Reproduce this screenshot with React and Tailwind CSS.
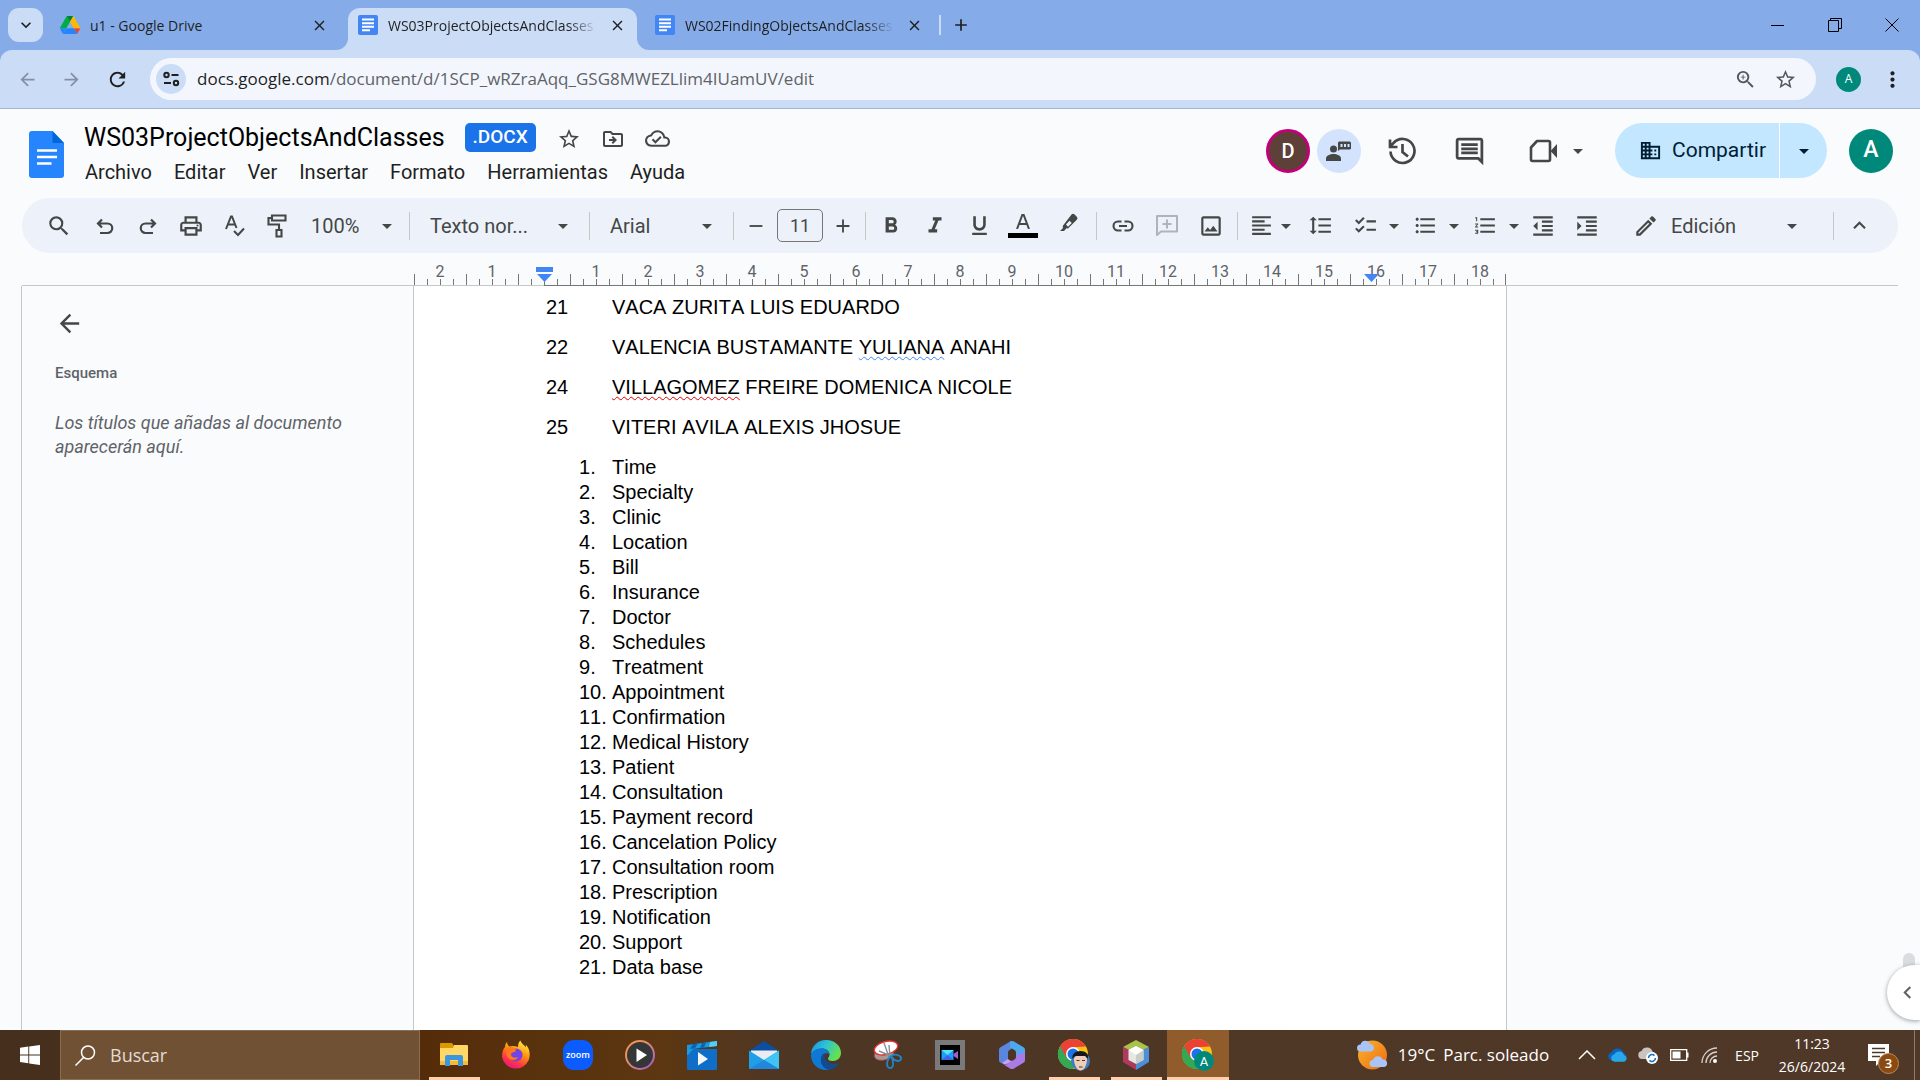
import React from "react";
import {
  MdAdd,
  MdArrowBack,
  MdArrowDropDown,
  MdArrowForward,
  MdChecklist,
  MdChevronLeft,
  MdClose,
  MdDomain,
  MdFormatAlignLeft,
  MdFormatBold,
  MdFormatIndentDecrease,
  MdFormatIndentIncrease,
  MdFormatItalic,
  MdFormatLineSpacing,
  MdFormatListBulleted,
  MdFormatListNumbered,
  MdFormatUnderlined,
  MdKeyboardArrowDown,
  MdKeyboardArrowUp,
  MdMoreVert,
  MdOutlineCloudDone,
  MdOutlineDriveFileMove,
  MdOutlineEdit,
  MdOutlineImage,
  MdOutlineInsertComment,
  MdOutlinePrint,
  MdRefresh,
  MdRemove,
  MdSearch,
  MdStarBorder,
  MdZoomIn,
} from "react-icons/md";

/* ---------- Browser chrome ---------- */

function DriveIcon() {
  return (
    <svg viewBox="0 0 87 78" className="h-[18px] w-5 shrink-0" aria-hidden="true">
      <path fill="#2684fc" d="M6.6 66.85l3.85 6.65c.8 1.4 1.95 2.5 3.3 3.3L27.5 53H0c0 1.55.4 3.1 1.2 4.5z" />
      <path fill="#00ac47" d="M43.65 25L29.9 1.2c-1.35.8-2.5 1.9-3.3 3.3L1.2 48.5A9 9 0 0 0 0 53h27.5z" />
      <path fill="#ea4335" d="M73.55 76.8c1.35-.8 2.5-1.9 3.3-3.3l1.6-2.75L86.1 57.5c.8-1.4 1.2-2.95 1.2-4.5H59.8l5.85 11.5z" />
      <path fill="#00832d" d="M43.65 25L57.4 1.2C56.05.4 54.5 0 52.9 0H34.4c-1.6 0-3.15.45-4.5 1.2z" />
      <path fill="#2684fc" d="M59.8 53H27.5L13.75 76.8c1.35.8 2.9 1.2 4.5 1.2h50.8c1.6 0 3.15-.45 4.5-1.2z" />
      <path fill="#ffba00" d="M73.4 26.5L60.7 4.5c-.8-1.4-1.95-2.5-3.3-3.3L43.65 25 59.8 53h27.45c0-1.55-.4-3.1-1.2-4.5z" />
    </svg>
  );
}

function DocTabIcon() {
  return (
    <svg viewBox="0 0 20 20" className="size-5 shrink-0" aria-hidden="true">
      <rect width="20" height="20" rx="2" fill="#4285f4" />
      <path d="M4 4.5h12M4 8.2h12M4 11.8h12M4 15.3h8" stroke="#fff" strokeWidth="1.9" />
    </svg>
  );
}

function Tab({ icon, title, active, fade }) {
  return (
    <div
      className={
        active
          ? "relative flex w-[289px] items-center rounded-t-xl bg-[#cbdcf6] pb-2 pl-[10px]"
          : "relative flex w-[298px] items-center pb-2 pl-[10px]"
      }
    >
      {active && (
        <>
          <span className="absolute bottom-0 -left-3 size-3 bg-[#cbdcf6]">
            <span className="block size-3 rounded-br-xl bg-[#85ace9]" />
          </span>
          <span className="absolute -right-3 bottom-0 size-3 bg-[#cbdcf6]">
            <span className="block size-3 rounded-bl-xl bg-[#85ace9]" />
          </span>
        </>
      )}
      <button
        className={
          fade
            ? "flex w-[239px] items-center gap-[10px] whitespace-nowrap [mask-image:linear-gradient(to_right,black_88%,transparent)]"
            : "flex w-[239px] items-center gap-[10px] whitespace-nowrap"
        }
      >
        {icon}
        <span className="text-[14px] text-[#1f1f1f]">{title}</span>
      </button>
      <button aria-label={"Cerrar " + title} className="ml-[10px] grid size-5 place-items-center">
        <MdClose size={17} color="#1f1f1f" />
      </button>
    </div>
  );
}

function TabStrip() {
  return (
    <div className="flex h-[50px] pt-2 font-['Open_Sans',sans-serif]">
      <button
        aria-label="Buscar pestañas"
        className="ml-2 grid h-[34px] w-[35px] place-items-center rounded-[11px] bg-[#cbdcf6]"
      >
        <MdKeyboardArrowDown size={20} color="#1f1f1f" />
      </button>
      <div className="ml-[7px] flex">
        <Tab icon={<DriveIcon />} title="u1 - Google Drive" />
        <Tab icon={<DocTabIcon />} title="WS03ProjectObjectsAndClasses" active fade />
      </div>
      <div className="ml-2 flex">
        <Tab icon={<DocTabIcon />} title="WS02FindingObjectsAndClasses" fade />
      </div>
      <span className="mt-[7px] -ml-1 h-5 w-[2px] bg-[#cbdcf6]" />
      <button aria-label="Nueva pestaña" className="ml-2 grid h-[34px] w-6 place-items-center">
        <MdAdd size={20} color="#1f1f1f" />
      </button>
      <div className="-mt-2 ml-auto flex h-[50px] text-black">
        <button aria-label="Minimizar" className="grid w-[57px] place-items-center">
          <span className="h-px w-[13px] bg-black" />
        </button>
        <button aria-label="Restaurar" className="grid w-[57px] place-items-center">
          <svg width="14" height="14" viewBox="0 0 14 14" fill="none" stroke="currentColor">
            <path d="M.5 2.5h10v11h-10zM2.5 2.5v-2h11v10h-3" />
          </svg>
        </button>
        <button aria-label="Cerrar" className="grid w-[57px] place-items-center">
          <svg width="14" height="14" viewBox="0 0 14 14" fill="none" stroke="currentColor">
            <path d="M.5.5l13 13M13.5.5l-13 13" />
          </svg>
        </button>
      </div>
    </div>
  );
}

function AddressBar() {
  return (
    <div className="flex h-[59px] items-center rounded-t-xl border-b border-[#a3b3d3] bg-[#cbdcf6] pr-[15px] font-['Open_Sans',sans-serif]">
      <button aria-label="Atrás" className="ml-4 grid size-[22px] place-items-center">
        <MdArrowBack size={21} color="#8490a6" />
      </button>
      <button aria-label="Adelante" className="ml-[22px] grid size-[22px] place-items-center">
        <MdArrowForward size={21} color="#8490a6" />
      </button>
      <button aria-label="Recargar" className="ml-6 grid size-[22px] place-items-center">
        <MdRefresh size={23} color="#1f1f1f" />
      </button>
      <div className="ml-[22px] flex h-[42px] flex-1 items-center rounded-full bg-[#f3f7fd] pr-[19px] pl-[6px]">
        <button aria-label="Información del sitio" className="grid size-[30px] place-items-center rounded-full bg-[#cbdcf6]">
          <svg width="17" height="16" viewBox="0 0 17 16" fill="none" stroke="#1f1f1f" strokeWidth="2">
            <circle cx="3.5" cy="4" r="2.2" />
            <path d="M8.5 4h7M1 12h7" />
            <circle cx="13" cy="12" r="2.2" />
          </svg>
        </button>
        <a href="#doc" className="ml-[11px] text-[17px] text-[#5f6368]">
          <span className="text-[#1f1f1f]">docs.google.com</span>
          /document/d/1SCP_wRZraAqq_GSG8MWEZLlim4IUamUV/edit
        </a>
        <button aria-label="Zoom" className="ml-auto">
          <MdZoomIn size={23} color="#54585d" />
        </button>
        <button aria-label="Añadir a marcadores" className="ml-[17px]">
          <MdStarBorder size={23} color="#54585d" />
        </button>
      </div>
      <button aria-label="Perfil" className="ml-5 grid size-[25px] place-items-center rounded-full bg-[#00897b] text-[12px] text-white">
        A
      </button>
      <button aria-label="Menú" className="ml-[19px]">
        <MdMoreVert size={25} color="#1f1f1f" />
      </button>
    </div>
  );
}

/* ---------- Document header ---------- */

const menus = ["Archivo", "Editar", "Ver", "Insertar", "Formato", "Herramientas", "Ayuda"];

function DocsLogo() {
  return (
    <svg width="35" height="47" viewBox="0 0 35 47" aria-hidden="true" className="mt-2 shrink-0">
      <path d="M3 0h20.5L35 12v32a3 3 0 0 1-3 3H3a3 3 0 0 1-3-3V3a3 3 0 0 1 3-3z" fill="#2684fc" />
      <path d="M23.5 0L35 12H23.5z" fill="#0066da" />
      <path d="M8 19.5h20M8 26h20M8 32.5h14.5" stroke="#fff" strokeWidth="2.6" />
    </svg>
  );
}

function Header() {
  return (
    <header className="flex h-[89px] pt-[14px] pr-[27px] pl-[29px]">
      <div className="flex">
        <DocsLogo />
        <div className="ml-5">
          <div className="flex h-[29px] items-center">
            <h1 className="text-[25px] text-black">WS03ProjectObjectsAndClasses</h1>
            <span className="ml-5 grid h-[29px] w-[71px] place-items-center rounded-[5px] bg-[#1a73e8] text-[19px] font-medium text-white">
              .DOCX
            </span>
            <div className="ml-[21px] flex gap-5 pt-[2px] text-[#444746]">
              <button aria-label="Destacar"><MdStarBorder size={24} /></button>
              <button aria-label="Mover"><MdOutlineDriveFileMove size={24} /></button>
              <button aria-label="Estado del documento"><MdOutlineCloudDone size={25} /></button>
            </div>
          </div>
          <nav className="mt-2 flex gap-[22px] pl-px text-[20px] leading-6 text-[#1f1f1f]">
            {menus.map((m) => (
              <button key={m}>{m}</button>
            ))}
          </nav>
        </div>
      </div>
      <div className="ml-auto flex h-[55px] items-center text-[#444746]">
        <button aria-label="Usuario D" className="grid size-11 place-items-center rounded-full border-[3px] border-[#c2007a] bg-[#5d4037] text-[20px] font-medium text-white">
          D
        </button>
        <button aria-label="Chat" className="ml-[7px] grid size-11 place-items-center rounded-full bg-[#d3e3fd]">
          <svg width="26" height="22" viewBox="0 0 26 22" fill="#444746">
            <circle cx="7.5" cy="9" r="3.5" />
            <path d="M0 21v-2.5C0 15.5 4 14 7.5 14s7.5 1.5 7.5 4.5V21z" />
            <path d="M13 1.5h10.5A1.5 1.5 0 0 1 25 3v5a1.5 1.5 0 0 1-1.5 1.5H14L12 11V2.5z" />
            <path d="M14.5 4h2v3h-2zM18 4h2v3h-2zM21.5 4h2v3h-2z" fill="#d3e3fd" />
          </svg>
        </button>
        <button aria-label="Historial" className="ml-[25px] grid size-8 place-items-center">
          <svg width="29" height="28" viewBox="0 0 29 28" fill="none" stroke="currentColor" strokeWidth="2.7">
            <path d="M2.5 14.5A12 12 0 1 0 5.5 6L2 9.5M2 2.5V10h7.5M14.5 7v8l5.5 4.5" />
          </svg>
        </button>
        <button aria-label="Comentarios" className="ml-[35px] grid size-8 place-items-center">
          <MdOutlineInsertComment size={33} />
        </button>
        <button aria-label="Videollamada" className="ml-11 flex items-center">
          <svg width="29" height="24" viewBox="0 0 29 24" fill="none" stroke="currentColor" strokeWidth="2.6">
            <path d="M8 2h11.5a1.5 1.5 0 0 1 1.5 1.5v17a1.5 1.5 0 0 1-1.5 1.5h-16A1.5 1.5 0 0 1 2 20.5V8.5z" strokeLinejoin="round" />
            <path d="M21.5 12L28 5v14z" fill="currentColor" stroke="none" />
          </svg>
          <MdArrowDropDown size={24} className="ml-2" />
        </button>
        <div className="ml-[25px] flex h-[55px] rounded-full bg-[#c2e7ff] text-[#001d35]">
          <button className="flex w-[165px] items-center gap-[10px] rounded-l-full border-r border-white pl-6 text-[21px]">
            <MdDomain size={23} className="shrink-0" />
            Compartir
          </button>
          <button aria-label="Opciones de compartir" className="grid w-[47px] place-items-center">
            <MdArrowDropDown size={24} />
          </button>
        </div>
        <button aria-label="Cuenta" className="ml-[22px] grid size-11 place-items-center rounded-full bg-[#00897b] text-[23px] font-medium text-white">
          A
        </button>
      </div>
    </header>
  );
}

/* ---------- Toolbar ---------- */

function Tool({ label, children }) {
  return (
    <button aria-label={label} className="grid h-11 w-11 shrink-0 place-items-center">
      {children}
    </button>
  );
}

function Divider({ className }) {
  return <span className={"h-7 w-px shrink-0 bg-[#c7c7c7] " + className} />;
}

function SplitTool({ label, children }) {
  return (
    <button aria-label={label} className="flex shrink-0 items-center gap-1">
      {children}
      <MdArrowDropDown size={24} />
    </button>
  );
}

function Toolbar() {
  return (
    <div
      role="toolbar"
      aria-label="Formato"
      className="mx-[22px] flex h-[55px] items-center rounded-full bg-[#edf2fa] pr-[17px] pl-[15px] text-[20px] text-[#444746]"
    >
      <Tool label="Buscar en los menús"><MdSearch size={26} /></Tool>
      <Tool label="Deshacer">
        <svg width="22" height="19" viewBox="-4 -2 22 19" fill="none" stroke="currentColor" strokeWidth="2.2">
          <path d="M6 1.5L2 5.5l4 4M2 5.5h9.5a4.7 4.7 0 0 1 0 9.5H4" />
        </svg>
      </Tool>
      <Tool label="Rehacer">
        <svg width="20" height="19" viewBox="-2 -2 20 19" fill="none" stroke="currentColor" strokeWidth="2.2">
          <path d="M12 1.5l4 4-4 4M16 5.5H6.5a4.7 4.7 0 0 0 0 9.5H14" />
        </svg>
      </Tool>
      <Tool label="Imprimir"><MdOutlinePrint size={26} /></Tool>
      <Tool label="Ortografía">
        <svg width="20" height="22" viewBox="0 0 20 22" fill="none" stroke="currentColor" strokeWidth="2">
          <path d="M1 14L6 1.5h1L11.5 13M3 9.5h7M9 16l4 4 6-6.5" />
        </svg>
      </Tool>
      <Tool label="Copiar formato">
        <svg width="24" height="24" viewBox="0 0 24 24" fill="none" stroke="currentColor" strokeWidth="2.1">
          <path d="M5 1.5h13.5v5H5zM5 4H1.5v6.5h10.5V16M9.5 16h5v6.5h-5z" />
        </svg>
      </Tool>
      <button className="flex w-[100px] shrink-0 items-center justify-between pr-[2px] pl-[10px]">
        100%
        <MdArrowDropDown size={24} />
      </button>
      <Divider className="ml-2" />
      <button className="flex w-[179px] shrink-0 items-center justify-between pr-[14px] pl-5">
        Texto nor...
        <MdArrowDropDown size={24} />
      </button>
      <Divider className="" />
      <button className="flex w-[143px] shrink-0 items-center justify-between pr-[14px] pl-5">
        Arial
        <MdArrowDropDown size={24} />
      </button>
      <Divider className="" />
      <button aria-label="Reducir tamaño" className="grid w-[43px] shrink-0 place-items-center"><MdRemove size={22} /></button>
      <input
        aria-label="Tamaño de fuente"
        defaultValue="11"
        className="h-[33px] w-[46px] shrink-0 rounded-[5px] border border-[#747775] bg-transparent text-center text-[18px]"
      />
      <button aria-label="Aumentar tamaño" className="grid w-10 shrink-0 place-items-center"><MdAdd size={22} /></button>
      <Divider className="mr-[3px] ml-[2px]" />
      <Tool label="Negrita"><MdFormatBold size={26} /></Tool>
      <Tool label="Cursiva"><MdFormatItalic size={26} /></Tool>
      <Tool label="Subrayado"><MdFormatUnderlined size={25} /></Tool>
      <Tool label="Color del texto">
        <span className="flex w-[30px] flex-col items-center border-b-[5px] border-black pb-1">
          <svg width="14" height="15" viewBox="0 0 14 15" fill="none" stroke="currentColor" strokeWidth="2">
            <path d="M1 15L6.3 1h1.4L13 15M3 10h8" />
          </svg>
        </span>
      </Tool>
      <Tool label="Color de resaltado">
        <svg width="24" height="28" viewBox="-4 0 24 28" fill="currentColor">
          <path d="M12.5 2.5a2.2 2.2 0 0 1 3.1 0l2.2 2.2a2.2 2.2 0 0 1 0 3.1L9 16.5l-1.5-.2L5 19H1l3-3-.3-2zM7 12.5L9 14.7 12.8 11 10.5 8.8z" fillRule="evenodd" />
        </svg>
      </Tool>
      <Divider className="mr-1 ml-[7px]" />
      <Tool label="Insertar enlace">
        <svg width="22" height="12" viewBox="0 0 22 12" fill="none" stroke="currentColor" strokeWidth="2.1">
          <path d="M9.5 1.5H6a4.5 4.5 0 0 0 0 9h3.5M12.5 1.5H16a4.5 4.5 0 0 1 0 9h-3.5M7 6h8" />
        </svg>
      </Tool>
      <Tool label="Añadir comentario">
        <svg width="22" height="22" viewBox="0 0 22 22" fill="none" stroke="#b0b4ba" strokeWidth="2">
          <path d="M1 20V1h20v15.5H5zM11 4.5v9M6.5 9h9" strokeLinejoin="round" />
        </svg>
      </Tool>
      <Tool label="Insertar imagen"><MdOutlineImage size={26} /></Tool>
      <Divider className="mr-[11px] ml-1" />
      <button aria-label="Alinear" className="flex shrink-0 items-center">
        <MdFormatAlignLeft size={25} />
        <MdArrowDropDown size={24} />
      </button>
      <Tool label="Interlineado"><MdFormatLineSpacing size={25} /></Tool>
      <div className="ml-[11px] flex gap-[7px]">
        <SplitTool label="Lista de comprobación"><MdChecklist size={25} /></SplitTool>
        <SplitTool label="Lista con viñetas"><MdFormatListBulleted size={25} /></SplitTool>
        <SplitTool label="Lista numerada"><MdFormatListNumbered size={25} /></SplitTool>
      </div>
      <div className="-ml-[5px] flex">
        <Tool label="Reducir sangría"><MdFormatIndentDecrease size={26} /></Tool>
        <Tool label="Aumentar sangría"><MdFormatIndentIncrease size={26} /></Tool>
      </div>
      <button className="ml-auto flex items-center">
        <MdOutlineEdit size={26} />
        <span className="ml-3 w-[109px] text-left">Edición</span>
        <MdArrowDropDown size={24} />
      </button>
      <Divider className="mr-[3px] ml-[29px]" />
      <Tool label="Ocultar los menús"><MdKeyboardArrowUp size={25} /></Tool>
    </div>
  );
}

/* ---------- Ruler and document ---------- */

const rulerLabels = ["2", "1", "", ...Array.from({ length: 18 }, (_, i) => String(i + 1))];

function Ruler() {
  return (
    <div className="relative flex h-full flex-col justify-end">
      <div className="flex">
        {rulerLabels.map((n, i) => (
          <div key={i} className="w-[52px] text-center text-[16px] leading-4 text-[#5f6368]">
            {n}
          </div>
        ))}
      </div>
      <div className="-mt-[6px] flex border-r border-[#747775]">
        {rulerLabels.map((n, i) => (
          <div key={i} className="flex h-[11px] flex-1 items-end text-[#747775]">
            <span className="h-[11px] w-[13px] border-l" />
            <span className="h-[6px] w-[13px] border-l" />
            <span className="h-[6px] w-[13px] border-l" />
            <span className="h-[6px] w-[13px] border-l" />
          </div>
        ))}
      </div>
      <div className="flex h-px bg-[#c7c7c7] px-[130px]">
        <span className="flex-1 bg-[#747775]" />
      </div>
      <svg width="17" height="15" viewBox="0 0 17 15" fill="#4285f4" className="absolute bottom-1 left-[122px]">
        <path d="M0 0h17v5H0zM1 7h15l-7.5 8z" />
      </svg>
      <svg width="15" height="8" viewBox="0 0 15 8" fill="#4285f4" className="absolute right-[127px] bottom-1">
        <path d="M0 0h15L7.5 8z" />
      </svg>
    </div>
  );
}

const people = [
  ["21", "VACA ZURITA LUIS EDUARDO"],
  [
    "22",
    <>
      VALENCIA BUSTAMANTE{" "}
      <span className="underline decoration-[#4285f4] decoration-wavy decoration-1 underline-offset-2 [text-decoration-skip-ink:none]">YULIANA</span> ANAHI
    </>,
  ],
  [
    "24",
    <>
      <span className="underline decoration-[#e00000] decoration-wavy decoration-1 underline-offset-2 [text-decoration-skip-ink:none]">VILLAGOMEZ</span> FREIRE
      DOMENICA NICOLE
    </>,
  ],
  ["25", "VITERI AVILA ALEXIS JHOSUE"],
];

const objects = [
  "Time",
  "Specialty",
  "Clinic",
  "Location",
  "Bill",
  "Insurance",
  "Doctor",
  "Schedules",
  "Treatment",
  "Appointment",
  "Confirmation",
  "Medical History",
  "Patient",
  "Consultation",
  "Payment record",
  "Cancelation Policy",
  "Consultation room",
  "Prescription",
  "Notification",
  "Support",
  "Data base",
];

function Workspace() {
  return (
    <div className="relative flex min-h-0 flex-1 flex-col">
      <div className="mx-[22px] grid h-[33px] shrink-0 grid-cols-[1fr_1092px_1fr]">
        <div className="border-b border-[#c7c7c7]" />
        <Ruler />
        <div className="border-b border-[#c7c7c7]" />
      </div>
      <div className="mx-[22px] grid min-h-0 flex-1 grid-cols-[1fr_1094px_1fr]">
        <aside className="-ml-px border-l border-[#c7c7c7] pt-[23px] pl-[33px]">
          <button aria-label="Cerrar esquema" className="block">
            <MdArrowBack size={29} color="#444746" />
          </button>
          <h2 className="mt-[25px] text-[15px] leading-5 font-medium text-[#5f6368]">Esquema</h2>
          <p className="mt-[28px] w-[320px] text-[18px] leading-6 text-[#5f6368] italic">
            Los títulos que añadas al documento aparecerán aquí.
          </p>
        </aside>
        <main className="overflow-hidden border-x border-[#c7c7c7] bg-white pt-[9px] pl-[132px] font-['Liberation_Sans',sans-serif] text-[20px] leading-[25px] text-black [font-kerning:none]">
          {people.map(([n, name]) => (
            <p key={n} className="mb-[15px] flex">
              <span className="w-[66px]">{n}</span>
              <span>{name}</span>
            </p>
          ))}
          <ol className="pl-[33px]">
            {objects.map((o, i) => (
              <li key={o} className="flex">
                <span className="w-[33px]">{i + 1}.</span>
                <span>{o}</span>
              </li>
            ))}
          </ol>
        </main>
        <div />
      </div>
      <span className="absolute right-[5px] bottom-[50px] h-[27px] w-3 rounded-full bg-[#dadce0]" />
      <button
        aria-label="Mostrar panel lateral"
        className="absolute right-0 bottom-[10px] grid h-[55px] w-[33px] place-items-center rounded-l-full bg-white shadow-[0_1px_4px_rgba(60,64,67,0.5)]"
      >
        <MdChevronLeft size={25} color="#5f6368" className="ml-2" />
      </button>
    </div>
  );
}

/* ---------- Taskbar ---------- */

function ExplorerIcon() {
  return (
    <svg width="30" height="30" viewBox="0 0 30 30">
      <path d="M1 4a1 1 0 0 1 1-1h11l2 3v4H1z" fill="#d99a00" />
      <path d="M1 8h13l1-3h13a1 1 0 0 1 1 1v19H1z" fill="#ffd767" />
      <path d="M1 21h28v4H1z" fill="#f3bb3a" />
      <path d="M6 26V17a2 2 0 0 1 2-2h14a2 2 0 0 1 2 2v9h-5v-6h-8v6z" fill="#3b96dd" />
    </svg>
  );
}

function FirefoxIcon() {
  return (
    <svg width="30" height="30" viewBox="0 0 30 30">
      <defs>
        <linearGradient id="ff" x1=".8" y1="0" x2=".3" y2="1">
          <stop offset="0" stopColor="#fff44f" />
          <stop offset=".4" stopColor="#ff980e" />
          <stop offset=".75" stopColor="#ff3647" />
          <stop offset="1" stopColor="#e31587" />
        </linearGradient>
      </defs>
      <path d="M17 7c0-3 1-5.5 2.5-6.5.5 3 4 4.5 5.5 7 0-1 0-2-.3-3 4 4 5 10 3 15.5A14 14 0 0 1 1 17C1 12 2 9 4 7c0-2 .8-4 2-5 .3 2 1 3.5 2.5 4.5C11 5.5 14 6 17 7z" fill="url(#ff)" />
      <circle cx="15" cy="15" r="6.5" fill="#7542e5" />
      <path d="M6 8c3-2 7-1 9 1l-1 3c-3 0-4 1-4 3 1 3 5 3 7 2-1 4-9 4-11-1-1-3-1-6 0-8z" fill="#ff7a1c" />
    </svg>
  );
}

function ZoomIcon() {
  return (
    <span className="grid size-[30px] place-items-center rounded-[11px] bg-[#0b5cff] pb-px font-['Open_Sans',sans-serif] text-[9px] font-semibold text-white">
      zoom
    </span>
  );
}

function MediaIcon() {
  return (
    <svg width="30" height="30" viewBox="0 0 30 30">
      <defs>
        <linearGradient id="mp" x1="0" y1="0" x2="1" y2="1">
          <stop offset="0" stopColor="#ff9a3c" />
          <stop offset=".5" stopColor="#d58a80" />
          <stop offset="1" stopColor="#9a50d8" />
        </linearGradient>
      </defs>
      <circle cx="15" cy="15" r="15" fill="url(#mp)" />
      <circle cx="15" cy="15" r="13" fill="#353637" />
      <path d="M11.5 8.5L22 15l-10.5 7z" fill="#fff" strokeLinejoin="round" />
    </svg>
  );
}

function MoviesIcon() {
  return (
    <svg width="30" height="30" viewBox="0 0 30 30">
      <path d="M0 9h30v20a1 1 0 0 1-1 1H1a1 1 0 0 1-1-1z" fill="#0f6fc8" />
      <path d="M0 9h6l-5 6H0z" fill="#1a9be6" />
      <path d="M0 5l30-4v5L5 9H0z" fill="#1799e0" />
      <path d="M6 4l5-.7-3 5-5 .7zM15 3l4-.6-2 5-4 .6z" fill="#0a62b5" />
      <path d="M23 2l7-1v5l-8 1z" fill="#4fd0fa" />
      <path d="M11 12l10 7-10 6.5z" fill="#f4f6f8" />
    </svg>
  );
}

function MailIcon() {
  return (
    <svg width="30" height="30" viewBox="0 0 30 30">
      <path d="M0 11L15 1l15 10v4H0z" fill="#0a4fa3" />
      <path d="M2 10.5h26v6L15 22 2 16z" fill="#e9edf2" />
      <path d="M0 10.5L15 20l15-9.5V29H0z" fill="#1f9fe8" />
      <path d="M15 20l15-9.5V29z" fill="#3fc4f3" />
      <path d="M15 20l15 9H0z" fill="#2087dc" />
    </svg>
  );
}

function EdgeIcon() {
  return (
    <svg width="30" height="30" viewBox="0 0 30 30">
      <defs>
        <linearGradient id="edg" x1="0" y1="0" x2="1" y2=".4">
          <stop offset="0" stopColor="#1a8fe0" />
          <stop offset=".5" stopColor="#2ac3d8" />
          <stop offset="1" stopColor="#66e050" />
        </linearGradient>
      </defs>
      <path d="M0 15C0 6 7 0 15 0c9 0 15 6 15 13 0 5-4 8-8 8-4 0-5-1.5-5-2.5 0-1 1.5-1.5 1.5-4C18.5 11 15 8.5 11 8.5 5 8.5 1 12 0 15z" fill="url(#edg)" />
      <path d="M0 15c1-4 5-6.5 10-6.5 5 0 8.5 3 8.5 6C17 12 10 13 10 20c0 5 4 9 9 9.5-1 .3-2.5.5-4 .5C6 30 0 23 0 15z" fill="#0f78d4" />
      <path d="M10 19c0-3 1.5-5 3.5-6-1 6 3 11 9 11 3 0 4.5-1.5 5.5-1-2 4-6 6.5-10 6.5-5-.5-8-5-8-10.5z" fill="#124a94" />
    </svg>
  );
}

function SnipIcon() {
  return (
    <svg width="30" height="30" viewBox="0 0 30 30">
      <ellipse cx="11" cy="14" rx="10" ry="6" transform="rotate(-15 11 14)" fill="#a19a96" stroke="#c33" strokeWidth=".7" />
      <ellipse cx="13" cy="8" rx="12" ry="6.5" transform="rotate(-15 13 8)" fill="#fff" stroke="#e23333" strokeWidth="1.4" />
      <path d="M11 3l5 14M6 11l12 5M17 17l-1-12" stroke="#8a8f94" strokeWidth="1.4" fill="none" />
      <path d="M18 16c-5 4-5 12-1 12s4-6 1-12c4 6 9 6 10 3s-5-6-10-3z" fill="none" stroke="#1f86c9" strokeWidth="1.8" />
    </svg>
  );
}

function VideoEditorIcon() {
  return (
    <svg width="30" height="30" viewBox="0 0 30 30">
      <path d="M0 0h30v30H0z" fill="#7a7a7a" />
      <path d="M5 5h20v20H5z" fill="#000" />
      <path d="M6.5 10h12v10h-12z" fill="#1e9ff0" />
      <path d="M6.5 10h12l-6 5z" fill="#53e3ff" />
      <path d="M6.5 20l6-5 6 5z" fill="#3f62e6" />
      <path d="M18.5 14l4.5-3v8l-4.5-3z" fill="#a45ad8" />
    </svg>
  );
}

function OfficeIcon() {
  return (
    <svg width="30" height="30" viewBox="0 0 30 30">
      <path d="M14 1L3.500 7.200A3 3 0 0 0 2 9.800v10.400a3 3 0 0 0 4.500 2.600L11 20v-7.500a3 3 0 0 1 1.500-2.600L17 7V2z" fill="#5b86e0" />
      <path d="M13 1.600a4 4 0 0 1 4 0l9.500 5.600A3 3 0 0 1 28 9.800V19l-9-3v-3.500a3 3 0 0 0-1.500-2.600L13 7.500z" fill="#4fa8ee" />
      <path d="M28 12v8.200a3 3 0 0 1-1.500 2.600L17 28.400a4 4 0 0 1-4 0l-7-4.200c2 .6 4 0 5-.8l6.500-3.900a3 3 0 0 0 1.500-2.600V15z" fill="#a97be6" />
      <path d="M11 19l1.500 1.200a4 4 0 0 0 4 0L11 23.500c-2 1.200-4.500.8-6-.5z" fill="#c9a2f5" />
      <path d="M11.500 12.500L15 10.200l3.500 2.300v4.700L15 19.400l-3.500-2.200z" fill="#4a3526" />
    </svg>
  );
}

function ChromeIcon({ badge }) {
  return (
    <svg width="34" height="32" viewBox="-1 0 34 32">
      <circle cx="15" cy="15" r="15" fill="#fbc116" />
      <path d="M2 7.5A15 15 0 0 0 15 30l6.5-11.300L15 15z" fill="#34a853" />
      <path d="M15 8.2V15L8.5 18.8 2 7.5A15 15 0 0 1 28 7.5z" fill="#ea4335" />
      <path d="M2 7.5l6.500 11.300L15 30A15 15 0 0 1 2 7.5z" fill="#34a853" />
      <circle cx="15" cy="15" r="7" fill="#fff" />
      <circle cx="15" cy="15" r="5.5" fill="#1a73e8" />
      {badge === "face" ? (
        <g>
          <circle cx="22.5" cy="22" r="9.5" fill="#3c7fbe" />
          <path d="M16 20c0-5 13-5 13 0 0 6-3 11.5-6.5 11.5S16 26 16 20z" fill="#f0cdb8" />
          <path d="M14.5 20c-1-5 3-8 8-8s9 3 7 8l-2-3H17z" fill="#15171a" />
          <path d="M18.5 21.5h3M24 21.5h3M21 28h3.5" stroke="#4a3328" strokeWidth="1" />
        </g>
      ) : (
        <g>
          <circle cx="22" cy="22" r="10" fill="#00897b" />
          <text x="22" y="26.5" textAnchor="middle" fontSize="13" fontFamily="Roboto, sans-serif" fill="#fff">
            A
          </text>
        </g>
      )}
    </svg>
  );
}

function NetBeansIcon() {
  return (
    <svg width="30" height="30" viewBox="0 0 30 30">
      <path d="M15 0l13 7-6 3-7-4-7 4-6-3z" fill="#a9c34a" />
      <path d="M2 7l6 3v10l7 4v6L2 22z" fill="#b03a5e" />
      <path d="M28 7l-6 3v10l-7 4v6l13-8z" fill="#4b8edb" />
      <path d="M15 6l7.5 4v10L15 24l-7.5-4V10z" fill="#e6e8e2" />
      <path d="M15 15v9l7.5-4V10z" fill="#c9cdc6" />
      <path d="M15 6l7.5 4L15 15l-7.5-5z" fill="#fff" />
    </svg>
  );
}

const apps = [
  { name: "Explorador de archivos", icon: <ExplorerIcon />, open: true },
  { name: "Firefox", icon: <FirefoxIcon /> },
  { name: "Zoom", icon: <ZoomIcon /> },
  { name: "Reproductor multimedia", icon: <MediaIcon /> },
  { name: "Películas y TV", icon: <MoviesIcon /> },
  { name: "Correo", icon: <MailIcon /> },
  { name: "Edge", icon: <EdgeIcon /> },
  { name: "Recortes", icon: <SnipIcon /> },
  { name: "Editor de vídeo", icon: <VideoEditorIcon /> },
  { name: "Microsoft 365", icon: <OfficeIcon /> },
  { name: "Chrome", icon: <ChromeIcon badge="face" />, open: true },
  { name: "NetBeans", icon: <NetBeansIcon />, open: true },
  { name: "Chrome A", icon: <ChromeIcon badge="letter" />, active: true },
];

function Cloud({ className, fill }) {
  return (
    <svg viewBox="0 0 24 15" className={className} fill={fill}>
      <path d="M5 15a5 5 0 0 1-.5-9.900A7.5 7.5 0 0 1 18.5 6 4.7 4.7 0 0 1 19 15z" />
    </svg>
  );
}

function Taskbar() {
  return (
    <footer className="flex h-[50px] shrink-0 items-stretch bg-linear-to-r from-[#46301d] via-[#4e3725] to-[#503828] font-['Open_Sans',sans-serif] text-white">
      <button aria-label="Inicio" className="grid w-[60px] shrink-0 place-items-center">
        <svg width="20" height="20" viewBox="0 0 20 20" fill="#fff">
          <path d="M0 2.8L8.3 1.6v7.9H0zM9.2 1.5L20 0v9.5H9.2zM0 10.4h8.3v7.9L0 17.1zM9.2 10.4H20V20L9.2 18.4z" />
        </svg>
      </button>
      <label className="flex w-[360px] shrink-0 items-center border border-[#8b6d50] bg-[#705134] pl-[14px]">
        <svg width="21" height="21" viewBox="0 0 21 21" fill="none" stroke="#fff" strokeWidth="1.5">
          <circle cx="13" cy="7.5" r="6.5" />
          <path d="M8.5 12.5L.5 20.5" />
        </svg>
        <input
          aria-label="Buscar"
          placeholder="Buscar"
          className="ml-[14px] w-[280px] bg-transparent text-[18px] text-white placeholder:text-[#e3dcd5]"
        />
      </label>
      <div className="flex bg-linear-to-r from-[#552c0a] from-0% via-[#5c3711] via-30% to-[#4e3624] to-45% pl-[3px]">
        {apps.map((a) => (
          <button
            key={a.name}
            aria-label={a.name}
            className={
              a.active
                ? "relative grid w-[62px] place-items-center bg-[#915c2b]"
                : "relative grid w-[62px] place-items-center"
            }
          >
            {a.icon}
            {a.open && <span className="absolute bottom-0 left-[6px] h-[3px] w-[51px] bg-[#ffcfae]" />}
            {a.active && <span className="absolute bottom-0 left-0 h-[3px] w-full bg-[#ffcfae]" />}
          </button>
        ))}
      </div>
      <div className="ml-auto flex items-center">
        <button className="flex items-center text-[17px]">
          <svg width="31" height="30" viewBox="0 0 31 30">
            <defs>
              <linearGradient id="sun" x1="0" y1="0" x2="1" y2="1">
                <stop offset="0" stopColor="#f8b62c" />
                <stop offset="1" stopColor="#ee6a14" />
              </linearGradient>
            </defs>
            <circle cx="15.5" cy="15" r="14.5" fill="url(#sun)" />
            <path d="M3.5 11.5a3.5 3.5 0 0 1 0-7A5 5 0 0 1 13 4a3.8 3.8 0 0 1 1 7.5z" fill="#a9c4f5" />
            <path d="M16 27a3.5 3.5 0 0 1 0-7 5 5 0 0 1 9.5-.5A3.8 3.8 0 0 1 27 27z" fill="#a9c4f5" />
          </svg>
          <span className="ml-[10px]">19°C</span>
          <span className="ml-2">Parc. soleado</span>
        </button>
        <button aria-label="Mostrar iconos ocultos" className="ml-[29px]">
          <svg width="18" height="10" viewBox="0 0 18 10" fill="none" stroke="#fff" strokeWidth="1.5">
            <path d="M1 9l8-8 8 8" />
          </svg>
        </button>
        <span className="relative ml-3 h-[14px] w-5">
          <Cloud className="absolute inset-0 w-5" fill="#0a64c2" />
          <Cloud className="absolute bottom-0 left-[3px] w-[17px]" fill="#28a8ea" />
        </span>
        <span className="relative ml-[10px] h-4 w-5">
          <Cloud className="absolute top-0 left-0 w-[19px]" fill="#c9c4c0" />
          <svg viewBox="0 0 12 12" className="absolute top-[5px] left-2 size-3">
            <circle cx="6" cy="6" r="6" fill="#fff" />
            <path d="M2.5 6a3.5 3.5 0 0 1 6-2.4M9.5 6a3.5 3.5 0 0 1-6 2.4" fill="none" stroke="#1272c4" strokeWidth="1.6" />
          </svg>
        </span>
        <svg width="19" height="12" viewBox="0 0 19 12" className="ml-3">
          <path d="M.7.7h16v10.600H.7z" fill="none" stroke="#fff" strokeWidth="1.3" />
          <path d="M2.5 2.5h8v7h-8zM17 3.5h1.5v5H17z" fill="#fff" />
        </svg>
        <svg width="17" height="16" viewBox="0 0 17 16" className="ml-3" fill="none" stroke="#d8d0c9" strokeWidth="1.3">
          <path d="M1 16A15 15 0 0 1 16 1M5 16A11 11 0 0 1 16 5M9 16a7 7 0 0 1 7-7" />
          <circle cx="14" cy="14" r="2" fill="#fff" stroke="none" />
        </svg>
        <button className="ml-[17px] text-[14px]">ESP</button>
        <button className="ml-[18px] w-[70px] text-center text-[14px] leading-[23px]">
          11:23
          <br />
          26/6/2024
        </button>
        <button aria-label="Notificaciones" className="relative ml-[21px] size-8">
          <svg width="21" height="22" viewBox="0 0 21 22" className="absolute top-[5px] left-0">
            <path d="M0 0h21v17h-8l-5 5v-5H0z" fill="#fff" />
            <path d="M4 4.5h13M4 8.5h13M4 12.5h8" stroke="#4f3727" strokeWidth="1.3" />
          </svg>
          <span className="absolute top-[14px] left-[10px] grid size-[21px] place-items-center rounded-full border border-[#b98a5e] bg-[#8a4a10] text-[13px] font-semibold">
            3
          </span>
        </button>
        <span className="ml-[14px] h-[50px] w-px bg-[#8d7b6e]" />
        <span className="w-[5px]" />
      </div>
    </footer>
  );
}

export default function App() {
  return (
    <div className="flex h-screen flex-col overflow-hidden bg-[#f9fbfd] font-[Roboto,sans-serif]">
      <div className="shrink-0 bg-[#85ace9]">
        <TabStrip />
        <AddressBar />
      </div>
      <Header />
      <Toolbar />
      <Workspace />
      <Taskbar />
    </div>
  );
}
